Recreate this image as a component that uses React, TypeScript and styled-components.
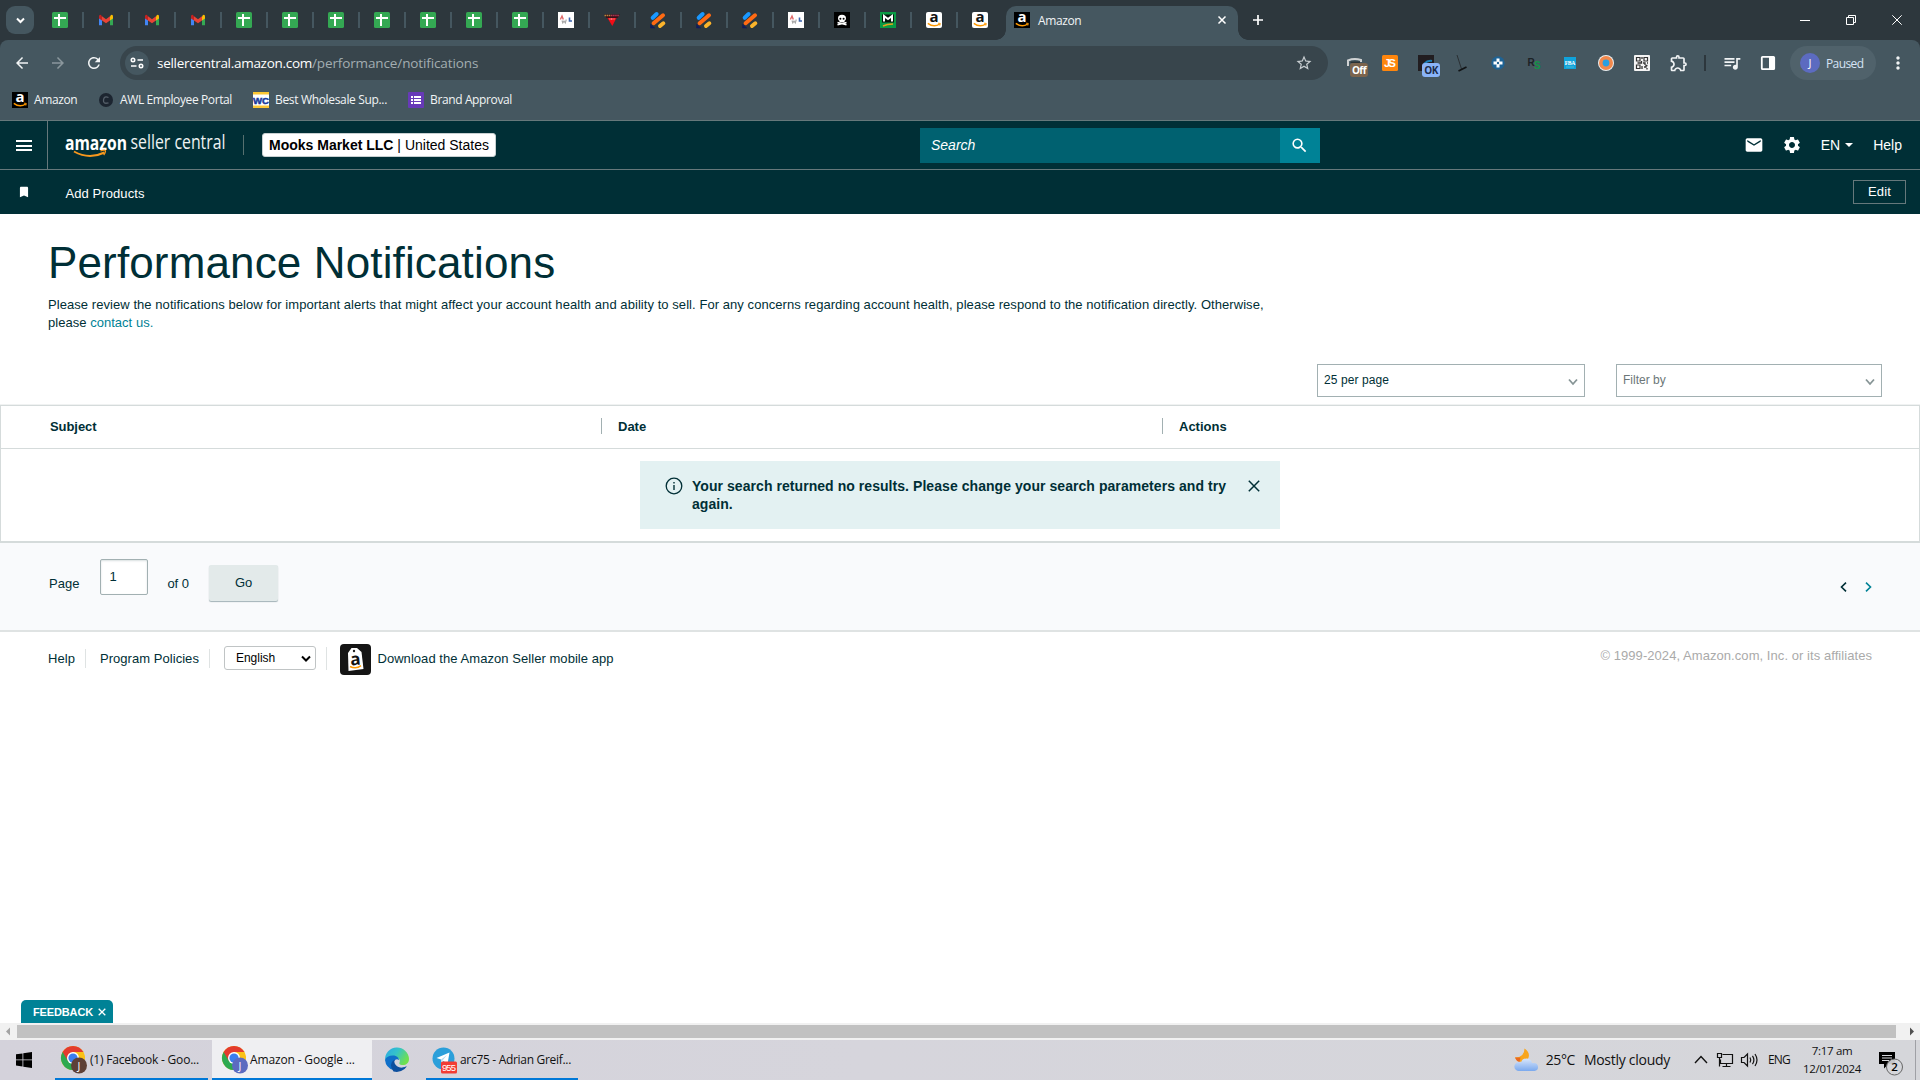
import React from "react";
import styled, { createGlobalStyle } from "styled-components";
import {
  MdArrowBack, MdArrowForward, MdBookmark, MdEmail, MdMoreVert, MdOutlineExtension,
  MdQueueMusic, MdRefresh, MdSearch, MdSettings, MdStarBorder,
} from "react-icons/md";

const ui = `"Open Sans", "Noto Sans", sans-serif`;
const arial = `"Liberation Sans", Arial, sans-serif`;

const Global = createGlobalStyle`
  * { box-sizing: border-box; }
  body { margin: 0; background: #fff; font-family: ${arial}; overflow: hidden; }
  svg { display: block; flex: none; overflow: visible; }
`;

const Screen = styled.div`
  width: 1920px;
  height: 1080px;
  display: flex;
  flex-direction: column;
  overflow: hidden;
`;

const Label = styled.span<{ $size?: number; $ls?: number; $color?: string; $ml?: number; $bold?: boolean }>`
  font-size: ${(p) => p.$size ?? 12}px;
  letter-spacing: ${(p) => p.$ls ?? 0}px;
  color: ${(p) => p.$color ?? "inherit"};
  margin-left: ${(p) => p.$ml ?? 0}px;
  font-weight: ${(p) => (p.$bold ? 700 : 400)};
  white-space: pre;
  flex: none;
`;
const Grow = styled.div`flex: 1;`;

/* ---------- browser chrome ---------- */
const TabStrip = styled.div`
  height: 40px;
  flex: none;
  display: flex;
  background: #2d373d;
  color: #f1f4f5;
  font-family: ${ui};
`;
const TabMenu = styled.div`
  width: 28px;
  height: 28px;
  margin: 6px 9px 0 6px;
  border-radius: 9px;
  background: #455760;
  display: grid;
  place-items: center;
`;
const PinnedTab = styled.div<{ $last?: boolean }>`
  width: 46px;
  height: 16px;
  margin-top: 12px;
  padding-left: 14px;
  border-right: 2px solid ${(p) => (p.$last ? "transparent" : "#455760")};
`;
const PinnedTabs = styled.div`
  display: flex;
  width: 963px;
  flex: none;
  & > div:first-child { width: 41px; padding-left: 9px; }
`;
const ActiveTab = styled.div`
  position: relative;
  width: 232px;
  height: 34px;
  margin-top: 6px;
  padding: 0 8px;
  display: flex;
  align-items: flex-start;
  border-radius: 10px 10px 0 0;
  background: #455760;
  & > svg { margin-top: 6px; }
  & > span { margin-top: 6px; line-height: 18px; }
  &::before, &::after {
    content: "";
    position: absolute;
    bottom: 0;
    width: 10px;
    height: 10px;
  }
  &::before { left: -10px; background: radial-gradient(circle at 0 0, transparent 9.5px, #455760 10px); }
  &::after { right: -10px; background: radial-gradient(circle at 100% 0, transparent 9.5px, #455760 10px); }
`;
const WindowButtons = styled.div`
  display: flex;
  gap: 36px;
  margin: 15px 18px 0 auto;
`;
const ToolbarWrap = styled.div`
  height: 80px;
  flex: none;
  background: #2d373d;
`;
const Toolbar = styled.div`
  height: 80px;
  background: #455760;
  border-radius: 8px 8px 0 0;
  font-family: ${ui};
  color: #f1f4f5;
`;
const NavRow = styled.div`
  height: 40px;
  padding-top: 6px;
  display: flex;
`;
const NavIcons = styled.div`
  width: 120px;
  flex: none;
  height: 34px;
  padding-left: 13px;
  display: flex;
  align-items: center;
  gap: 18px;
`;
const UrlBar = styled.div`
  width: 1208px;
  flex: none;
  height: 34px;
  border-radius: 17px;
  background: #38454c;
  padding: 0 15px 0 5px;
  display: flex;
  align-items: center;
`;
const Tune = styled.div`
  width: 24px;
  height: 24px;
  border-radius: 50%;
  background: #455760;
  display: grid;
  place-items: center;
`;
const Extensions = styled.div`
  display: flex;
  flex: none;
  align-items: center;
  height: 34px;
  margin-left: 18px;
`;
const Ext = styled.div<{ $shift?: number }>`
  position: relative;
  width: 36px;
  flex: none;
  display: flex;
  & > svg { margin-left: ${(p) => p.$shift ?? 0}px; }
`;
const Badge = styled.span<{ $bg: string; $fg: string }>`
  position: absolute;
  left: 4px;
  top: 8px;
  width: 18px;
  height: 14px;
  border-radius: 3px;
  background: ${(p) => p.$bg};
  color: ${(p) => p.$fg};
  font: 700 10px/14px ${ui};
  letter-spacing: -0.5px;
  text-align: center;
`;
const ExtRule = styled.div`
  width: 2px;
  height: 16px;
  margin: 0 17px 0 -2px;
  background: #2d373d;
`;
const ProfilePill = styled.div`
  width: 86px;
  flex: none;
  height: 34px;
  margin-left: -5px;
  border-radius: 17px;
  background: #50626b;
  color: #d6e3f5;
  display: flex;
  align-items: center;
  padding-left: 10px;
`;
const Avatar = styled.div`
  width: 20px;
  height: 20px;
  border-radius: 50%;
  background: #5c6bc0;
  color: #fff;
  font-size: 11px;
  line-height: 20px;
  text-align: center;
`;
const Overflow = styled.div`
  height: 34px;
  margin-left: 12px;
  display: flex;
  align-items: center;
`;
const Bookmarks = styled.div`
  height: 40px;
  display: flex;
  align-items: center;
  padding-left: 12px;
`;
const Bookmark = styled.div<{ $w: number }>`
  width: ${(p) => p.$w}px;
  display: flex;
  align-items: center;
  & > span { margin-top: -1px; }
`;

/* ---------- seller central header ---------- */
const TopBar = styled.header`
  height: 50px;
  flex: none;
  display: flex;
  background: #002f36;
  border-top: 1px solid #66787b;
  border-bottom: 1px solid #66787b;
  color: #fff;
`;
const MenuCell = styled.div`
  width: 48px;
  border-right: 1px solid #66787b;
  display: flex;
  flex-direction: column;
  gap: 2.5px;
  padding: 19px 0 0 16px;
`;
const MenuLine = styled.i`
  width: 16px;
  height: 2px;
  background: #fff;
`;
const LogoBox = styled.div`
  width: 196px;
  margin: 14px 0 0 0;
  height: 20px;
  padding-left: 17px;
  border-right: 1px solid #56706f;
`;
const Account = styled.div`
  width: 234px;
  height: 24px;
  margin: 12px 0 0 18px;
  padding-left: 6px;
  border: 1px solid #c8d0d1;
  border-radius: 3px;
  background: #fff;
  color: #000;
  display: flex;
  align-items: center;
`;
const SearchBox = styled.div`
  width: 400px;
  height: 35px;
  margin: 7px 0 0 424px;
  background: #006170;
  display: flex;
  align-items: center;
  font-style: italic;
  & > span { margin-top: -1px; }
`;
const SearchButton = styled.div`
  width: 40px;
  height: 35px;
  margin-left: auto;
  padding: 0 1px 1px 0;
  background: #008296;
  display: grid;
  place-items: center;
`;
const TopRight = styled.div`
  display: flex;
  align-items: center;
  margin: 0 18px 0 auto;
`;
const TopIcons = styled.div`
  display: flex;
  gap: 18px;
`;
const Caret = styled.i`
  margin-left: 5px;
  border: 4px solid transparent;
  border-top: 4px solid #fff;
  border-bottom: 0;
`;
const FavBar = styled.div`
  height: 44px;
  flex: none;
  display: flex;
  align-items: center;
  padding: 0 14px 0 17px;
  background: #002f36;
  color: #fff;
  & > span { margin-top: 2px; }
`;
const EditButton = styled.div`
  width: 53px;
  height: 24px;
  margin: 0 0 0 auto;
  border: 1px solid #66787b;
  display: grid;
  place-items: center;
  line-height: 20px;
`;

/* ---------- page ---------- */
const Page = styled.main`
  height: 809px;
  flex: none;
  display: flex;
  flex-direction: column;
  color: #002f36;
`;
const Title = styled.h1`
  margin: 24px 0 0 48px;
  font-size: 44px;
  font-weight: 400;
  line-height: 50px;
  letter-spacing: 0.14px;
  white-space: nowrap;
`;
const Intro = styled.p`
  margin: 8px 0 0 48px;
  line-height: 18px;
  height: 36px;
  display: flex;
  flex-direction: column;
`;
const Link = styled.a`color: #008296;`;
const Filters = styled.div`
  display: flex;
  gap: 31px;
  margin: 32px 38px 8px auto;
`;
const Dropdown = styled.div<{ $w: number }>`
  width: ${(p) => p.$w}px;
  height: 33px;
  padding: 0 6px 2px 6px;
  border: 1px solid #a2b0b2;
  display: flex;
  align-items: center;
  justify-content: space-between;
  & > svg { margin-top: 5px; }
`;
const Table = styled.section`
  height: 138px;
  border: 1px solid #d5dbdb;
  border-bottom: 2px solid #d5dbdb;
  box-shadow: 0 -1px 0 #f0f2f2;
`;
const HeadRow = styled.div`
  height: 43px;
  padding-bottom: 2px;
  display: flex;
  align-items: center;
  border-bottom: 1px solid #d5dbdb;
`;
const HeadCell = styled.div<{ $w: number; $first?: boolean }>`
  width: ${(p) => p.$w}px;
  height: 16px;
  line-height: 15px;
  padding-left: ${(p) => (p.$first ? 49 : 16)}px;
  border-left: ${(p) => (p.$first ? 0 : 1)}px solid #a2b0b2;
`;
const Alert = styled.div`
  width: 640px;
  height: 68px;
  margin: 12px auto 0;
  padding: 16px 0 0 25px;
  background: #e3f1f2;
  display: flex;
`;
const AlertText = styled.div`
  width: 556px;
  margin-left: 9px;
  line-height: 18px;
  display: flex;
  flex-direction: column;
`;
const Pager = styled.div`
  height: 89px;
  padding: 16px 48px 0 49px;
  display: flex;
  background: #f9fafc;
  border-bottom: 2px solid #dfe3e3;
  line-height: 16px;
  & > span { margin-top: 17px; }
`;
const PageInput = styled.div`
  width: 48px;
  height: 36px;
  margin-left: 21px;
  padding: 8px 8px;
  border: 1px solid #a2b0b2;
  border-radius: 2px;
  background: #fff;
  box-shadow: inset 0 1px 2px rgba(0, 47, 54, 0.15);
`;
const GoButton = styled.div`
  width: 69px;
  height: 36px;
  margin: 6px 0 0 20px;
  border-radius: 2px;
  background: #e3eaea;
  box-shadow: 0 1px 1px rgba(0, 47, 54, 0.35);
  line-height: 34px;
  text-align: center;
`;
const Arrows = styled.div`
  display: flex;
  gap: 18px;
  margin: 23px 0 0 auto;
`;
const Footer = styled.footer`
  height: 52px;
  padding: 0 48px;
  display: flex;
  align-items: center;
`;
const Copyright = styled.div`
  height: 22px;
  line-height: 16px;
  color: #aaa;
`;
const Rule = styled.i<{ $ml: number; $mr: number; $h: number }>`
  width: 1px;
  height: ${(p) => p.$h}px;
  margin: 0 ${(p) => p.$mr}px 0 ${(p) => p.$ml}px;
  background: #dfe3e3;
`;
const LangSelect = styled.div`
  width: 92px;
  height: 24px;
  padding: 0 4px 0 11px;
  border: 1px solid #c0c4c5;
  border-radius: 3px;
  color: #000;
  display: flex;
  align-items: center;
  justify-content: space-between;
`;
const AppIcon = styled.svg`
  margin-top: 3px;
`;
const Feedback = styled.div`
  width: 92px;
  height: 23px;
  margin: auto 0 0 21px;
  padding: 1px 7px 0 12px;
  border-radius: 5px 5px 0 0;
  background: #008296;
  color: #fff;
  display: flex;
  align-items: center;
  justify-content: space-between;
`;
const ScrollBar = styled.div`
  height: 17px;
  flex: none;
  display: flex;
  align-items: center;
  background: #f1f1f1;
`;
const Thumb = styled.div`
  width: 1879px;
  height: 13px;
  margin: 0 14px 0 7px;
  background: #c1c1c1;
`;

/* ---------- taskbar ---------- */
const Taskbar = styled.div`
  height: 40px;
  flex: none;
  display: flex;
  background: linear-gradient(90deg, #d4d2db, #d6d5dc 45%, #d5d6da);
  color: #111;
  font-family: ${ui};
`;
const Start = styled.div`
  width: 55px;
  padding: 12px 0 0 16px;
`;
const Task = styled.div<{ $w: number; $active?: boolean; $mr?: number }>`
  width: ${(p) => p.$w}px;
  margin-right: ${(p) => p.$mr ?? 0}px;
  padding-left: ${(p) => (p.$active ? 10 : 6)}px;
  display: flex;
  align-items: center;
  background: ${(p) => (p.$active ? "#efeff2" : "transparent")};
  border-bottom: 2px solid #0078d7;
  padding-top: 2px;
  & > span { margin-top: -1px; }
`;
const EdgeSlot = styled.div`
  width: 54px;
  padding: 8px 0 0 13px;
`;
const Tray = styled.div`
  margin-left: auto;
  display: flex;
  align-items: center;
  & > span { margin-top: -1px; }
`;
const TrayIcons = styled.svg`
  margin-left: 20px;
`;
const Clock = styled.div`
  width: 60px;
  margin: -1px 17px 0 12px;
  display: flex;
  flex-direction: column;
  align-items: center;
  line-height: 18px;
`;
const ShowDesktop = styled.div`
  width: 5px;
  height: 40px;
  margin-left: 10px;
  border-left: 1px solid #9fa0a5;
`;

/* ---------- drawings ---------- */
const Sheets = () => (
  <svg width="16" height="16" viewBox="0 0 16 16">
    <rect width="16" height="16" rx="1.6" fill="#34a853" />
    <path d="M2 6h12M7 2v12" stroke="#fff" strokeWidth="2" />
  </svg>
);
const Gmail = () => (
  <svg width="16" height="16" viewBox="0 0 16 16">
    <path d="M1 4v9.3h3V7z" fill="#4285f4" />
    <path d="M15 4v9.3h-3V7z" fill="#34a853" />
    <path d="M12 4.4 13 3q2-.8 2 1.4V6.5L12 8.5z" fill="#fbbc04" />
    <path d="M4 4.4 3 3Q1 2.3 1 4.4V6.5L4 8.5z" fill="#c5221f" />
    <path d="M4 4.2 8 7.3 12 4.2V8.4L8 11.3 4 8.4z" fill="#ea4335" />
  </svg>
);
const Awl = () => (
  <svg width="16" height="16" viewBox="0 0 16 16">
    <rect width="16" height="16" fill="#fff" />
    <path d="M2.400 7.500 4 4l1.300 3.500" fill="none" stroke="#e06a6a" strokeWidth="1.400" />
    <path d="m4 8.500.8 2.500L6 9l1.300 2L8.300 7.500" fill="none" stroke="#a5a5a5" strokeWidth="1.100" />
    <path d="M11.500 5.500V9H14" fill="none" stroke="#3d64ad" strokeWidth="1.600" />
  </svg>
);
const RedTriangle = () => (
  <svg width="16" height="16" viewBox="0 0 16 16">
    <path d="M3.500 6h9L8.300 14z" fill="#f20d17" />
    <path d="M0 2.500h16L13.500 6h-11z" fill="#3a1018" />
    <path d="M.5 3.600H7" stroke="#b98a3e" strokeWidth="1.500" strokeDasharray="1.500 .6" />
    <path d="M7 3.600h8.500" stroke="#b13a55" strokeWidth="1.500" strokeDasharray="1.500 .6" />
    <path d="M5.500 7h5" stroke="#fff" strokeWidth=".8" strokeDasharray="1 .5" />
  </svg>
);
const Stripes = () => (
  <svg width="16" height="16" viewBox="0 0 16 16" strokeLinecap="round" strokeWidth="4">
    <path d="M2.700 5.800 6.600 2" stroke="#1a98ff" />
    <path d="M3.600 11.200 13 3.300" stroke="#ff6a13" />
    <path d="m10 14 3.300-2.700" stroke="#fbb42b" />
    <path d="M.5 12.500v3.500h4z" fill="#101b5c" stroke="#101b5c" strokeWidth=".5" />
  </svg>
);
const Skull = () => (
  <svg width="16" height="16" viewBox="0 0 16 16">
    <rect width="16" height="16" fill="#000" />
    <path d="M4 6.500a4 3.700 0 0 1 8 0Q12 8 10.500 9v1.300h-5V9Q4 8 4 6.500" fill="#fff" />
    <path d="m3.500 12.800 9-2.300M12.500 12.800l-9-2.300" stroke="#fff" strokeWidth="1.500" />
    <circle cx="6.400" cy="6.800" r="1" /><circle cx="9.600" cy="6.800" r="1" />
  </svg>
);
const Menards = () => (
  <svg width="16" height="16" viewBox="0 0 16 16">
    <rect width="16" height="16" fill="#0a9a44" />
    <path d="M2 2.500h12v8H2z" fill="#06150c" />
    <path d="M4 9.500V4l4 3 4-3v5.500" fill="none" stroke="#fff" strokeWidth="2" />
    <path d="M3 14q4-1.800 10-2" fill="none" stroke="#e8a01c" strokeWidth="1.500" />
  </svg>
);
const AmazonIcon = ({ dark = false }: { dark?: boolean }) => (
  <svg width="16" height="16" viewBox="0 0 16 16">
    <rect width="16" height="16" rx={dark ? 0 : 2} fill={dark ? "#000" : "#fff"} />
    <text x="8" y="10.300" fontSize="15" fontWeight="700" textAnchor="middle" fontFamily='"Open Sans", sans-serif' fill={dark ? "#fff" : "#111"}>a</text>
    <path d="M1.800 11.400q6 4.400 12 .6" fill="none" stroke="#f90" strokeWidth="1.400" />
    <path d="m12 11.200 2.300.2-.5 2.200" fill="none" stroke="#f90" strokeWidth=".9" />
  </svg>
);
const Chevron = ({ w = 8, d = 4, sw = 2, color = "#fff" }: { w?: number; d?: number; sw?: number; color?: string }) => (
  <svg width={w + 2} height={d + 3} viewBox={`0 0 ${w + 2} ${d + 3}`}>
    <path d={`M1 1.500l${w / 2} ${d}l${w / 2} ${-d}`} fill="none" stroke={color} strokeWidth={sw} />
  </svg>
);
const Cross = ({ s, sw, color = "#fff" }: { s: number; sw: number; color?: string }) => (
  <svg width={s} height={s} viewBox={`0 0 ${s} ${s}`}>
    <path d={`M.7.7 ${s - 0.7} ${s - 0.7}M${s - 0.7}.7.7 ${s - 0.7}`} stroke={color} strokeWidth={sw} />
  </svg>
);
const SellerLogo = () => (
  <svg width="162" height="26" viewBox="0 0 162 26">
    <text x="0" y="15" fontSize="20" fontWeight="700" fontFamily='"Open Sans", sans-serif' fill="#fff" textLength="62" lengthAdjust="spacingAndGlyphs">amazon</text>
    <text x="65.500" y="14" fontSize="19.500" fontWeight="400" fontFamily='"Open Sans", sans-serif' fill="#eef2f2" textLength="95" lengthAdjust="spacingAndGlyphs">seller central</text>
    <path d="M9 16.500q15 8.500 30.500 1" fill="none" stroke="#f7981d" strokeWidth="2" />
    <path d="M35.500 15.800q5-1.500 5 .2t-1.800 4" fill="none" stroke="#f7981d" strokeWidth="1.300" />
  </svg>
);
const ChromeIcon = ({ badge }: { badge: string }) => (
  <svg width="27" height="28" viewBox="0 0 27 28">
    <circle cx="12" cy="12" r="12" fill="#fbc116" />
    <path d="M12 12 1.600 6A12 12 0 0 0 12 24l5.200-9z" fill="#2da94f" />
    <path d="M1.600 6 7 15l5-9h10.400A12 12 0 0 0 1.600 6" fill="#e33b2e" />
    <circle cx="12" cy="12" r="6" fill="#fff" />
    <circle cx="12" cy="12" r="4.600" fill="#3b7ded" />
    <circle cx="18" cy="19.500" r="8" fill={badge} />
    <text x="18" y="23.500" fontSize="10.500" fontFamily='"Open Sans", sans-serif' textAnchor="middle" fill="#fff">J</text>
  </svg>
);
const EdgeIcon = () => (
  <svg width="24" height="24" viewBox="0 0 24 24">
    <defs>
      <linearGradient id="eg" x1="0" x2="1" y2=".5"><stop stopColor="#2aa6e8" /><stop offset=".5" stopColor="#35c3c9" /><stop offset="1" stopColor="#6ee04f" /></linearGradient>
    </defs>
    <path d="M0 12A12 12 0 0 1 24 11c0 4-3 6-6 6-4 0-4-1.500-3.300-3S14 9 10 9Q3 9 0 12" fill="url(#eg)" />
    <path d="M0 12Q1.500 7.500 8 7.500c4 0 6 2.500 6 4.500q-3-2-5 1.500C7 19 13 22 21 18.500A12 12 0 0 1 0 12" fill="#0f6fc9" />
    <path d="M9.500 11.500Q3 16 8.500 23.400A12 12 0 0 0 22 18.300Q16 21 12 18.200 8.500 15.500 9.500 11.500" fill="#0d4f9e" />
  </svg>
);
const Telegram = () => (
  <svg width="26" height="28" viewBox="0 0 26 28">
    <circle cx="11.500" cy="12.500" r="11" fill="#2b9fda" />
    <path d="m4.500 12 13-5.500-2 11.500-4-3-2 2-.5-3.500z" fill="#fff" />
    <path d="m9 13.500 6-4.500-4.500 5.500-1 2.500z" fill="#b7dcef" />
    <rect x="9" y="15.500" width="16" height="12" rx="1.500" fill="#f23c34" />
    <text x="10" y="25" fontSize="9.500" fontFamily='"Liberation Sans", sans-serif' textLength="14" fill="#fff">955</text>
  </svg>
);
const Weather = () => (
  <svg width="25" height="24" viewBox="0 0 25 24">
    <defs><linearGradient id="wc" x2="0" y2="1"><stop stopColor="#d8e6fb" /><stop offset="1" stopColor="#7ba9ee" /></linearGradient></defs>
    <path d="M10.500.5Q17 5 14 11l-6 3Q3 13.500 1 9.500 10.500 9.500 10.500.5" fill="#f8a51b" />
    <path d="M1 9.500h5.500l-1 4.500Q2.500 13.500 1 9.500" fill="#ea6a1f" />
    <path d="M5 23a4.500 4.500 0 0 1-.3-9Q6 14 7 14.500 8 10.500 12.500 10.500q4.500 0 5.500 4.500h1.500a4 4 0 0 1 1 8z" fill="url(#wc)" />
  </svg>
);
const Qr = () => (
  <svg width="16" height="16" viewBox="0 0 16 16">
    <rect width="16" height="16" rx="1" fill="#f4f4f4" />
    <path d="M2.500 2.500h3.500v3.500h-3.500zM10 2.500h3.500v3.500H10zM2.500 10h3.500v3.500h-3.500z" fill="none" stroke="#333" strokeWidth="1.200" />
    <path d="M8 2v2M7.500 6v2h-4M9 8h2v2M13 8h1M8 11v3M10 12h2v-1.500h1.500M13 13v1.500" stroke="#333" strokeWidth="1.300" fill="none" />
  </svg>
);
const Messages = () => (
  <svg width="26" height="40" viewBox="0 0 26 40">
    <path d="M0 12h16v12H9.500L5 28.500V24H0z" fill="#000" />
    <path d="M3 15.500h10M3 18h10M3 20.500h7" stroke="#d5d6da" />
    <circle cx="15.500" cy="27" r="8" fill="#d5d6da" fillOpacity=".92" stroke="#666" />
    <text x="15.500" y="31.200" fontSize="11.500" fontWeight="600" fontFamily='"Open Sans", sans-serif' textAnchor="middle">2</text>
  </svg>
);

const tabIcons = [
  Sheets, Gmail, Gmail, Gmail, Sheets, Sheets, Sheets, Sheets, Sheets, Sheets, Sheets,
  Awl, RedTriangle, Stripes, Stripes, Stripes, Awl, Skull, Menards, AmazonIcon, AmazonIcon,
];

export default function App() {
  return (
    <Screen>
      <Global />
      <TabStrip>
        <TabMenu><Chevron w={7} d={3.5} /></TabMenu>
        <PinnedTabs>
          {tabIcons.map((Icon, i) => (
            <PinnedTab key={i} $last={i === tabIcons.length - 1}><Icon /></PinnedTab>
          ))}
        </PinnedTabs>
        <ActiveTab>
          <AmazonIcon dark />
          <Label $ls={-0.4} $ml={8}>Amazon</Label>
          <Grow />
          <svg width="16" height="16" viewBox="0 0 16 16"><path d="m4.500 4.500 7 7M11.500 4.500l-7 7" stroke="#fff" strokeWidth="1.500" /></svg>
        </ActiveTab>
        <svg width="40" height="40" viewBox="0 0 40 40"><path d="M20 15v10M15 20h10" stroke="#fff" strokeWidth="1.700" /></svg>
        <WindowButtons>
          <svg width="10" height="10" viewBox="0 0 10 10"><path d="M0 5.500h10" stroke="#fff" /></svg>
          <svg width="10" height="10" viewBox="0 0 10 10"><path d="M.5 2.500h7v7h-7zM2.500 2.500v-2h7v7h-2" stroke="#fff" fill="none" /></svg>
          <svg width="10" height="10" viewBox="0 0 10 10"><path d="m.3.3 9.400 9.400M9.700.3.3 9.700" stroke="#fff" /></svg>
        </WindowButtons>
      </TabStrip>

      <ToolbarWrap>
        <Toolbar>
          <NavRow>
            <NavIcons>
              <MdArrowBack size={18} /><MdArrowForward size={18} color="#8b979d" /><MdRefresh size={18} />
            </NavIcons>
            <UrlBar>
              <Tune>
                <svg width="14" height="12" viewBox="0 0 14 12" fill="none" stroke="#fff" strokeWidth="1.600">
                  <circle cx="3" cy="3" r="1.700" /><path d="M7.500 3H13M1 9h5.500" /><circle cx="11" cy="9" r="1.700" />
                </svg>
              </Tune>
              <Label $size={13.5} $ls={-0.29} $ml={8} $color="#fff">sellercentral.amazon.com</Label>
              <Label $size={13.5} $ls={-0.12} $color="#a3adb1">/performance/notifications</Label>
              <Grow />
              <MdStarBorder size={18} color="#c8ced1" />
            </UrlBar>
            <Extensions>
              <Ext>
                <svg width="16" height="16" viewBox="0 0 16 16"><path d="M2 11V5.500q6-2.500 13-.5v2" fill="none" stroke="#d0d3d4" strokeWidth="2" /><path d="M4.500 7.200h9.500" stroke="#23292c" strokeWidth="1.200" /></svg>
                <Badge $bg="#7b644d" $fg="#fff">Off</Badge>
              </Ext>
              <Ext>
                <svg width="16" height="16" viewBox="0 0 16 16"><rect width="16" height="16" rx="1.500" fill="#ff860d" /><text x="2" y="12.300" fontSize="11.500" fontWeight="700" textLength="12" fontFamily='"Liberation Sans", sans-serif' fill="#fff">JS</text></svg>
              </Ext>
              <Ext>
                <svg width="16" height="16" viewBox="0 0 16 16"><rect width="16" height="16" fill="#211d20" /><path d="M6 9q4-4 8-3" fill="none" stroke="#1e7fb8" strokeWidth="2" /></svg>
                <Badge $bg="#8ab4f8" $fg="#1b2b4a">OK</Badge>
              </Ext>
              <Ext>
                <svg width="16" height="16" viewBox="0 0 16 16"><path d="m3 0 4.500 14" stroke="#2a3034" strokeWidth="1" /><path d="m4.500 16 8-4" stroke="#101315" strokeWidth="1.800" /></svg>
              </Ext>
              <Ext>
                <svg width="16" height="16" viewBox="0 0 16 16"><circle cx="8" cy="8" r="6.700" fill="#1f6394" /><path d="M8 3.500v9M3.500 8h9" stroke="#fff" strokeWidth="3" /><circle cx="8" cy="8" r="1.200" fill="#1f6394" /></svg>
              </Ext>
              <Ext>
                <svg width="16" height="16" viewBox="0 0 16 16" fontWeight="700" fontFamily='"Liberation Sans", sans-serif'><text x="1.500" y="11" fontSize="10" fill="#1c2226">R</text><text x="8" y="13.500" fontSize="10" fill="#129347">S</text></svg>
              </Ext>
              <Ext>
                <svg width="16" height="16" viewBox="0 0 16 16"><rect x="2" y="2" width="12" height="12" fill="#0fa3dc" /><text x="2.800" y="9.500" fontSize="5.600" fontWeight="700" textLength="10.500" fontFamily='"Liberation Serif", serif' fill="#fff">FBA</text><path d="M4 12h8" stroke="#7cc" strokeWidth=".6" /></svg>
              </Ext>
              <Ext>
                <svg width="16" height="16" viewBox="0 0 16 16"><circle cx="8" cy="8" r="8" fill="#eceff0" /><circle cx="8" cy="8" r="5.200" fill="#2a9fe0" stroke="#f2884b" strokeWidth="3.600" /></svg>
              </Ext>
              <Ext><Qr /></Ext>
              <Ext $shift={-1}><MdOutlineExtension size={20} /></Ext>
              <ExtRule />
              <Ext $shift={-1}><MdQueueMusic size={20} /></Ext>
              <Ext $shift={1}>
                <svg width="16" height="16" viewBox="0 0 16 16"><rect x="1.800" y="1.800" width="12.400" height="12.400" rx=".8" fill="none" stroke="#fff" strokeWidth="1.800" /><path d="M9 1.500h5v13H9z" fill="#fff" /></svg>
              </Ext>
            </Extensions>
            <ProfilePill>
              <Avatar>J</Avatar>
              <Label $ls={-0.6} $ml={6}>Paused</Label>
            </ProfilePill>
            <Overflow><MdMoreVert size={20} /></Overflow>
          </NavRow>
          <Bookmarks>
            <Bookmark $w={86}><AmazonIcon dark /><Label $ls={-0.4} $ml={6}>Amazon</Label></Bookmark>
            <Bookmark $w={155}>
              <svg width="16" height="16" viewBox="0 0 16 16"><circle cx="8" cy="8" r="7" fill="#1c2530" /><path d="M10.500 5.500Q6 3.500 5.500 8T10.500 10.800" fill="none" stroke="#56606a" strokeWidth="1.300" /></svg>
              <Label $ls={-0.387} $ml={6}>AWL Employee Portal</Label>
            </Bookmark>
            <Bookmark $w={155}>
              <svg width="16" height="16" viewBox="0 0 16 16"><rect width="16" height="16" fill="#fff" /><path d="M0 1.300h16M0 14.700h16" stroke="#fbc634" strokeWidth="2.600" /><text x="0" y="11.500" fontSize="9.500" fontWeight="700" textLength="16" lengthAdjust="spacingAndGlyphs" fontFamily='"Liberation Sans", sans-serif' fill="#183a9c" stroke="#183a9c" strokeWidth=".5">WC</text></svg>
              <Label $ls={-0.336} $ml={6}>Best Wholesale Sup...</Label>
            </Bookmark>
            <Bookmark $w={110}>
              <svg width="16" height="16" viewBox="0 0 16 16"><rect width="16" height="16" rx="1" fill="#673ab7" /><path d="M3 5h2M3 8h2M3 11h2M6 5h7M6 8h7M6 11h7" stroke="#fff" strokeWidth="1.800" /></svg>
              <Label $ls={-0.374} $ml={6}>Brand Approval</Label>
            </Bookmark>
          </Bookmarks>
        </Toolbar>
      </ToolbarWrap>

      <TopBar>
        <MenuCell><MenuLine /><MenuLine /><MenuLine /></MenuCell>
        <LogoBox><SellerLogo /></LogoBox>
        <Account>
          <Label $size={14} $bold>Mooks Market LLC</Label>
          <Label $size={14}>{" | United States"}</Label>
        </Account>
        <SearchBox>
          <Label $size={14} $ml={11}>Search</Label>
          <SearchButton><MdSearch size={19} /></SearchButton>
        </SearchBox>
        <TopRight>
          <TopIcons><MdEmail size={20} /><MdSettings size={20} /></TopIcons>
          <Label $size={14} $ml={19}>EN</Label>
          <Caret />
          <Label $size={14} $ml={20}>Help</Label>
        </TopRight>
      </TopBar>
      <FavBar>
        <MdBookmark size={14} />
        <Label $ml={34.5} $size={13} $ls={0.08}>Add Products</Label>
        <EditButton><Label $size={13} $ls={0.1}>Edit</Label></EditButton>
      </FavBar>

      <Page>
        <Title>Performance Notifications</Title>
        <Intro>
          <Label $size={13} $ls={0.06}>Please review the notifications below for important alerts that might affect your account health and ability to sell. For any concerns regarding account health, please respond to the notification directly. Otherwise,</Label>
          <Label $size={13} $ls={0.03}>please <Link>contact us.</Link></Label>
        </Intro>
        <Filters>
          <Dropdown $w={268}><Label $ls={0.085}>25 per page</Label><Chevron w={8} d={4.5} sw={1.8} color="#879596" /></Dropdown>
          <Dropdown $w={266}><Label $color="#6c7778">Filter by</Label><Chevron w={8} d={4.5} sw={1.8} color="#879596" /></Dropdown>
        </Filters>
        <Table>
          <HeadRow>
            <HeadCell $w={600} $first><Label $size={13} $ls={-0.067} $bold>Subject</Label></HeadCell>
            <HeadCell $w={561}><Label $size={13} $bold>Date</Label></HeadCell>
            <HeadCell $w={757}><Label $size={13} $bold>Actions</Label></HeadCell>
          </HeadRow>
          <Alert>
            <svg width="18" height="18" viewBox="0 0 18 18"><circle cx="9" cy="9" r="7.800" fill="none" stroke="#002f36" strokeWidth="1.300" /><path d="M9 8v5M9 5v1.600" stroke="#002f36" strokeWidth="1.400" /></svg>
            <AlertText>
              <Label $size={14} $ls={0.057} $bold>Your search returned no results. Please change your search parameters and try</Label>
              <Label $size={14} $ls={0.06} $bold>again.</Label>
            </AlertText>
            <svg width="12" height="18" viewBox="0 0 12 18"><path d="m.8 3.800 10.400 10.400M11.200 3.800.8 14.200" stroke="#002f36" strokeWidth="1.500" /></svg>
          </Alert>
        </Table>
        <Pager>
          <Label $size={13}>Page</Label>
          <PageInput><Label $size={13}>1</Label></PageInput>
          <Label $size={13} $ml={19}>of 0</Label>
          <GoButton><Label $size={13}>Go</Label></GoButton>
          <Arrows>
            <svg width="7" height="10" viewBox="0 0 7 10"><path d="M6 .7 1.500 5 6 9.300" fill="none" stroke="#002f36" strokeWidth="1.600" /></svg>
            <svg width="7" height="10" viewBox="0 0 7 10"><path d="M1 .7 5.500 5 1 9.300" fill="none" stroke="#008296" strokeWidth="1.600" /></svg>
          </Arrows>
        </Pager>
        <Footer>
          <Label $size={13} $ls={0.05}>Help</Label>
          <Rule $ml={10} $mr={14} $h={19} />
          <Label $size={13} $ls={0.046}>Program Policies</Label>
          <Rule $ml={10} $mr={14} $h={19} />
          <LangSelect><Label>English</Label><Chevron w={8} d={4} sw={2} color="#000" /></LangSelect>
          <Rule $ml={10} $mr={13.5} $h={23} />
          <AppIcon width="31" height="31" viewBox="0 0 31 31">
            <rect width="31" height="31" rx="4" fill="#151515" />
            <path d="m8 9 3.500-5h5.500l4.500 4 2 17-15 2z" fill="#fff" /><circle cx="14" cy="7" r="1.200" fill="#222" />
            <text x="15.500" y="21" fontSize="17" fontWeight="700" fontFamily='"Open Sans", sans-serif' textAnchor="middle" fill="#111" transform="rotate(-5 15 18)">a</text>
            <path d="M10 22.500q6 3 11-.8" fill="none" stroke="#f90" strokeWidth="1.500" />
          </AppIcon>
          <Label $size={13} $ls={0.055} $ml={6}>Download the Amazon Seller mobile app</Label>
          <Grow />
          <Copyright><Label $size={13} $ls={0.06}>© 1999-2024, Amazon.com, Inc. or its affiliates</Label></Copyright>
        </Footer>
        <Feedback><Label $size={11} $ls={-0.14} $bold>FEEDBACK</Label><Cross s={8} sw={1.3} /></Feedback>
      </Page>

      <ScrollBar>
        <svg width="10" height="9" viewBox="0 0 10 9"><path d="M10 .5v8l-4-4z" fill="#a3a3a3" /></svg>
        <Thumb />
        <svg width="5" height="9" viewBox="0 0 5 9"><path d="M0 .5v8l4-4z" fill="#505050" /></svg>
      </ScrollBar>

      <Taskbar>
        <Start>
          <svg width="16" height="16" viewBox="0 0 16 16"><path d="M0 2.300 6.500 1.400v6.100H0zM7.300 1.300 16 0v7.500H7.300zM0 8.300h6.500v6.200L0 13.600zM7.300 8.300H16V16l-8.700-1.300z" /></svg>
        </Start>
        <Task $w={153} $mr={4}><ChromeIcon badge="#5d4037" /><Label $ls={-0.2} $ml={2}>(1) Facebook - Goo...</Label></Task>
        <Task $w={160} $active><ChromeIcon badge="#5c6bc0" /><Label $ls={-0.15} $ml={1}>Amazon - Google ...</Label></Task>
        <EdgeSlot><EdgeIcon /></EdgeSlot>
        <Task $w={152}><Telegram /><Label $ls={-0.306} $ml={2}>arc75 - Adrian Greif...</Label></Task>
        <Tray>
          <Weather />
          <Label $size={14} $ls={-0.4} $ml={7}>25°C</Label>
          <Label $size={14} $ls={-0.28} $ml={9}>Mostly cloudy</Label>
          <TrayIcons width="70" height="40" viewBox="0 0 70 40" fill="none" stroke="#111" strokeWidth="1.200">
            <path d="m5 23 6-6.500 6 6.500" strokeWidth="1.400" />
            <path d="M32.500 14.500h10v9H30.500v-4M27.500 13.500h4v4h-4zM29.500 17.500v9M36.500 23.500v3M32.500 26.500h8" />
            <path d="M51.500 17.500h2.500l3.500-3.500v12l-3.500-3.500h-2.500zM60 17.500q1.500 2.500 0 5M62.500 15.800q2.800 4.200 0 8.400M65 14q4 6 0 12" />
          </TrayIcons>
          <Label $ls={-0.8} $ml={8}>ENG</Label>
          <Clock>
            <Label $size={11.5} $ls={-0.3}>7:17 am</Label>
            <Label $size={11.5} $ls={-0.3}>12/01/2024</Label>
          </Clock>
          <Messages />
          <ShowDesktop />
        </Tray>
      </Taskbar>
    </Screen>
  );
}
